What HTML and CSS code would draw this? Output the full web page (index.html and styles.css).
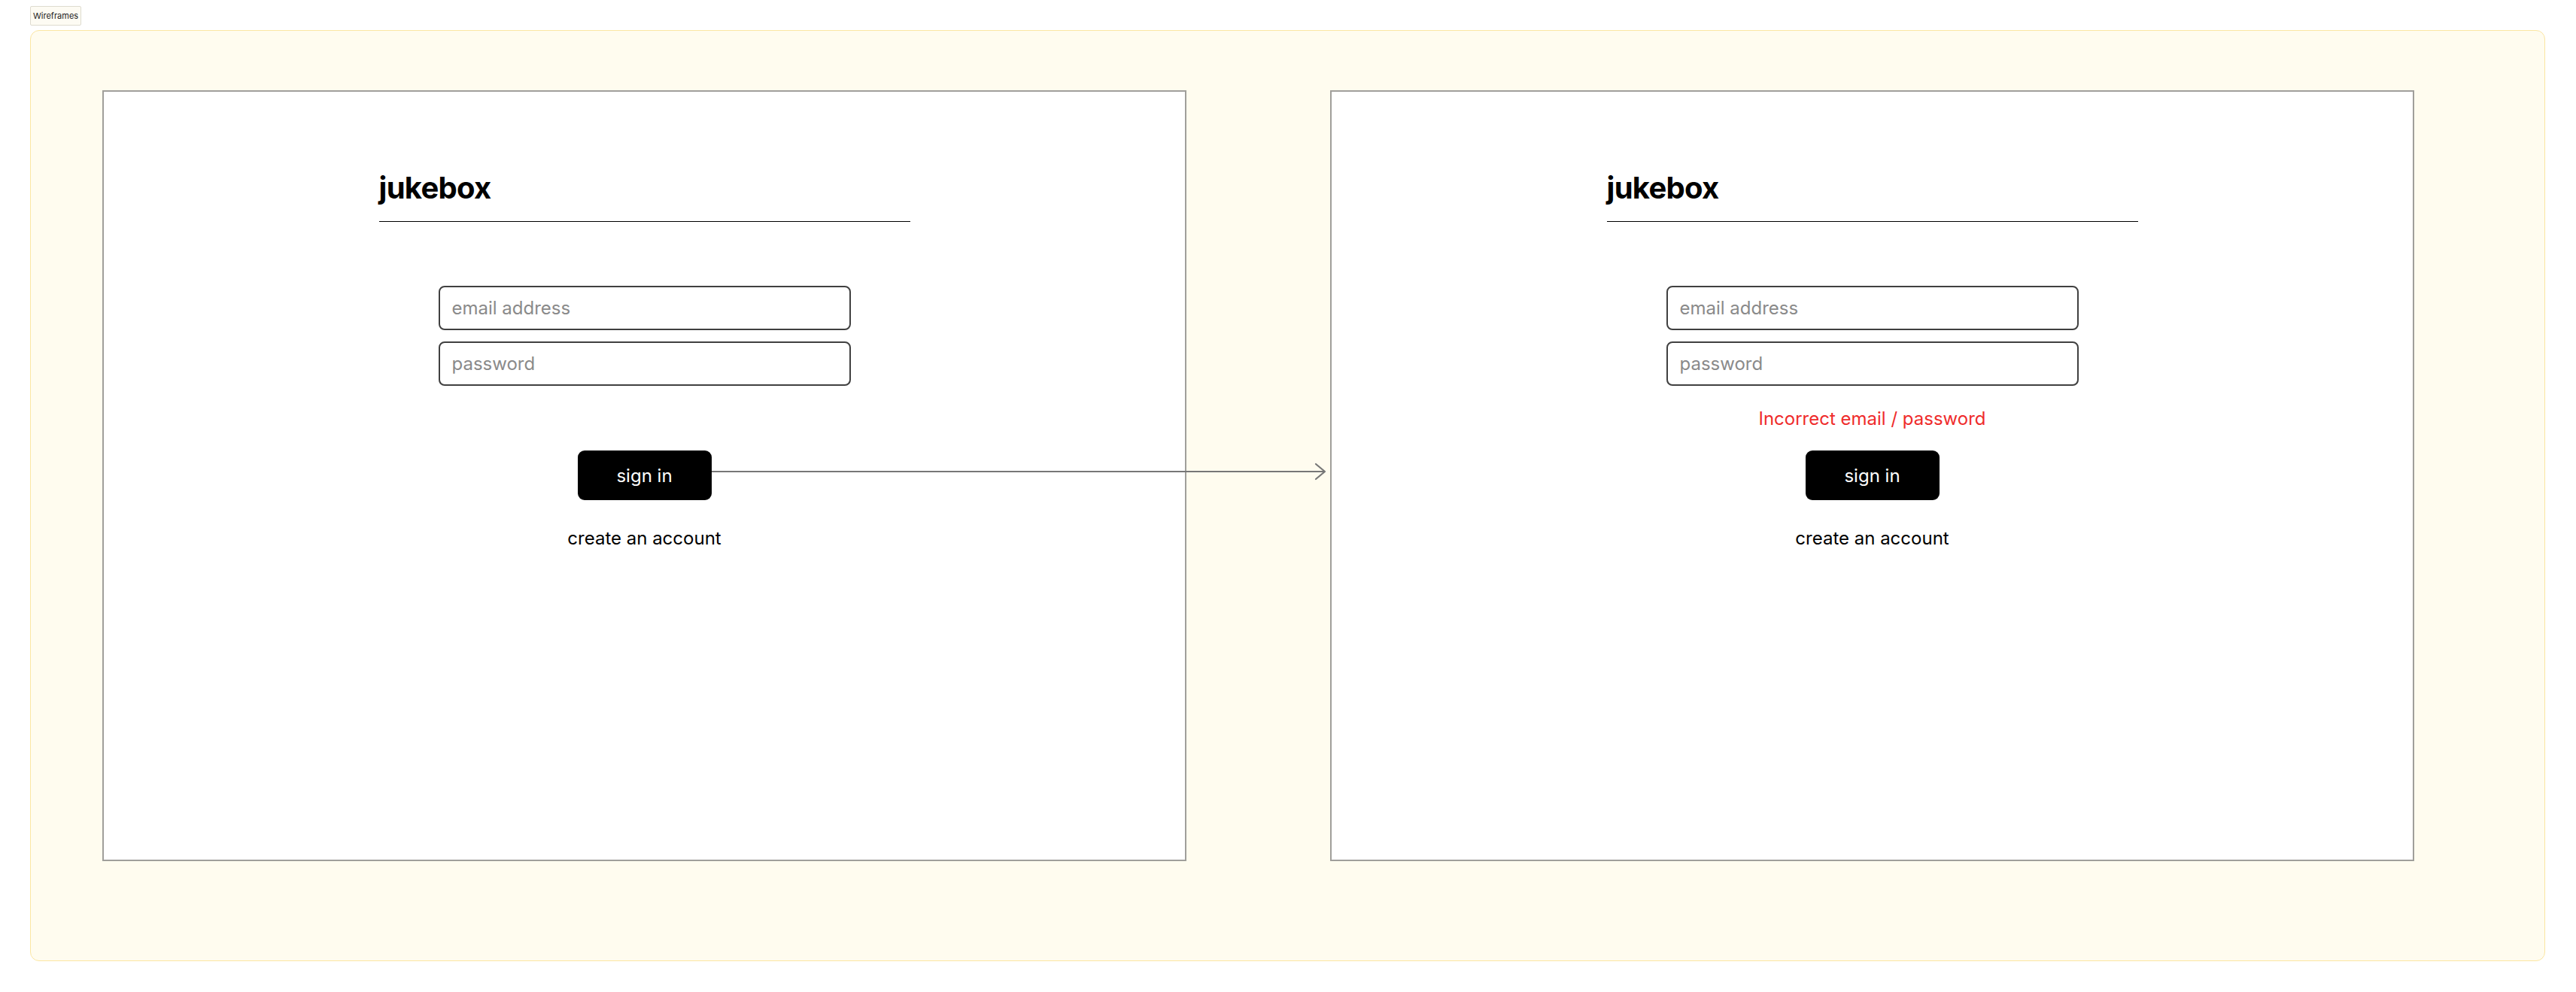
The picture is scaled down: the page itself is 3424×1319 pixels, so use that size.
FILE: index.html
```html
<!DOCTYPE html>
<html lang="en">
<head>
<meta charset="utf-8">
<title>Wireframes</title>
<link rel="stylesheet" href="styles.css">
</head>
<body>
  <div class="section-label">Wireframes</div>
  <section class="section">
    <div class="frame">
      <div class="brand"><h1 class="brand-title">jukebox</h1></div>
      <form class="fields">
        <input class="field" type="email" placeholder="email address">
        <input class="field" type="password" placeholder="password">
      </form>
      <p class="error"></p>
      <button class="btn" type="button">sign in</button>
      <a class="link">create an account</a>
    </div>
    <div class="frame">
      <div class="brand"><h1 class="brand-title">jukebox</h1></div>
      <form class="fields">
        <input class="field" type="email" placeholder="email address">
        <input class="field" type="password" placeholder="password">
      </form>
      <p class="error">Incorrect email / password</p>
      <button class="btn" type="button">sign in</button>
      <a class="link">create an account</a>
    </div>
    <svg class="connector" width="820" height="24" viewBox="0 0 820 24" aria-hidden="true">
      <line x1="0" y1="12" x2="814" y2="12" stroke="#777" stroke-width="2"/>
      <polyline points="803,2 815,12 803,22" fill="none" stroke="#777" stroke-width="2.2" stroke-linecap="round" stroke-linejoin="round"/>
    </svg>
  </section>
</body>
</html>
```

FILE: styles.css
```css
* { box-sizing: border-box; }

body {
  margin: 0;
  padding: 8px 0 0 40px;
  background: #ffffff;
  font-family: Inter, "Noto Sans", "Liberation Sans", sans-serif;
  color: #000;
}

.section-label {
  display: inline-block;
  height: 26px;
  padding: 0 3px;
  border: 1px solid #dedbcf;
  border-radius: 2px;
  background: #fdfbf3;
  font-size: 11px;
  line-height: 24px;
  color: #222;
  vertical-align: top;
}

.section {
  position: relative;
  margin-top: 6px;
  width: 3343px;
  height: 1238px;
  padding: 79px 0 0 95px;
  border: 1px solid #fbe6a2;
  border-radius: 12px;
  background: #fffcef;
  display: flex;
  align-items: flex-start;
  gap: 191px;
}

.frame {
  width: 1441px;
  height: 1025px;
  border: 2px solid #a09f9b;
  background: #fff;
  display: flex;
  flex-direction: column;
  align-items: center;
}

.brand {
  width: 706px;
  margin-top: 104px;
  padding-bottom: 20px;
  border-bottom: 1px solid #000;
}

.brand-title {
  margin: 0;
  font-size: 40px;
  line-height: 48px;
  font-weight: 700;
  letter-spacing: -0.7px;
}

.fields {
  margin: 85px 0 0;
  display: flex;
  flex-direction: column;
  gap: 15px;
}

.field {
  width: 548px;
  height: 59px;
  padding: 0 16px;
  border: 2px solid #404040;
  border-radius: 8px;
  background: #fff;
  font-family: Inter, "Noto Sans", "Liberation Sans", sans-serif;
  font-size: 24px;
  color: #000;
  outline: none;
}

.field::placeholder {
  color: #8a8a8a;
}

.error {
  margin: 29px 0 0;
  height: 29px;
  font-size: 24px;
  line-height: 29px;
  color: #ef2b2b;
}

.btn {
  margin-top: 28px;
  width: 178px;
  height: 66px;
  border: 0;
  border-radius: 9px;
  background: #000;
  color: #fff;
  font-family: Inter, "Noto Sans", "Liberation Sans", sans-serif;
  font-size: 24px;
  line-height: 29px;
  padding: 0;
}

.link {
  margin-top: 36px;
  font-size: 24px;
  line-height: 29px;
  color: #000;
}

.connector {
  position: absolute;
  left: 905px;
  top: 574px;
  z-index: 1;
}
```
